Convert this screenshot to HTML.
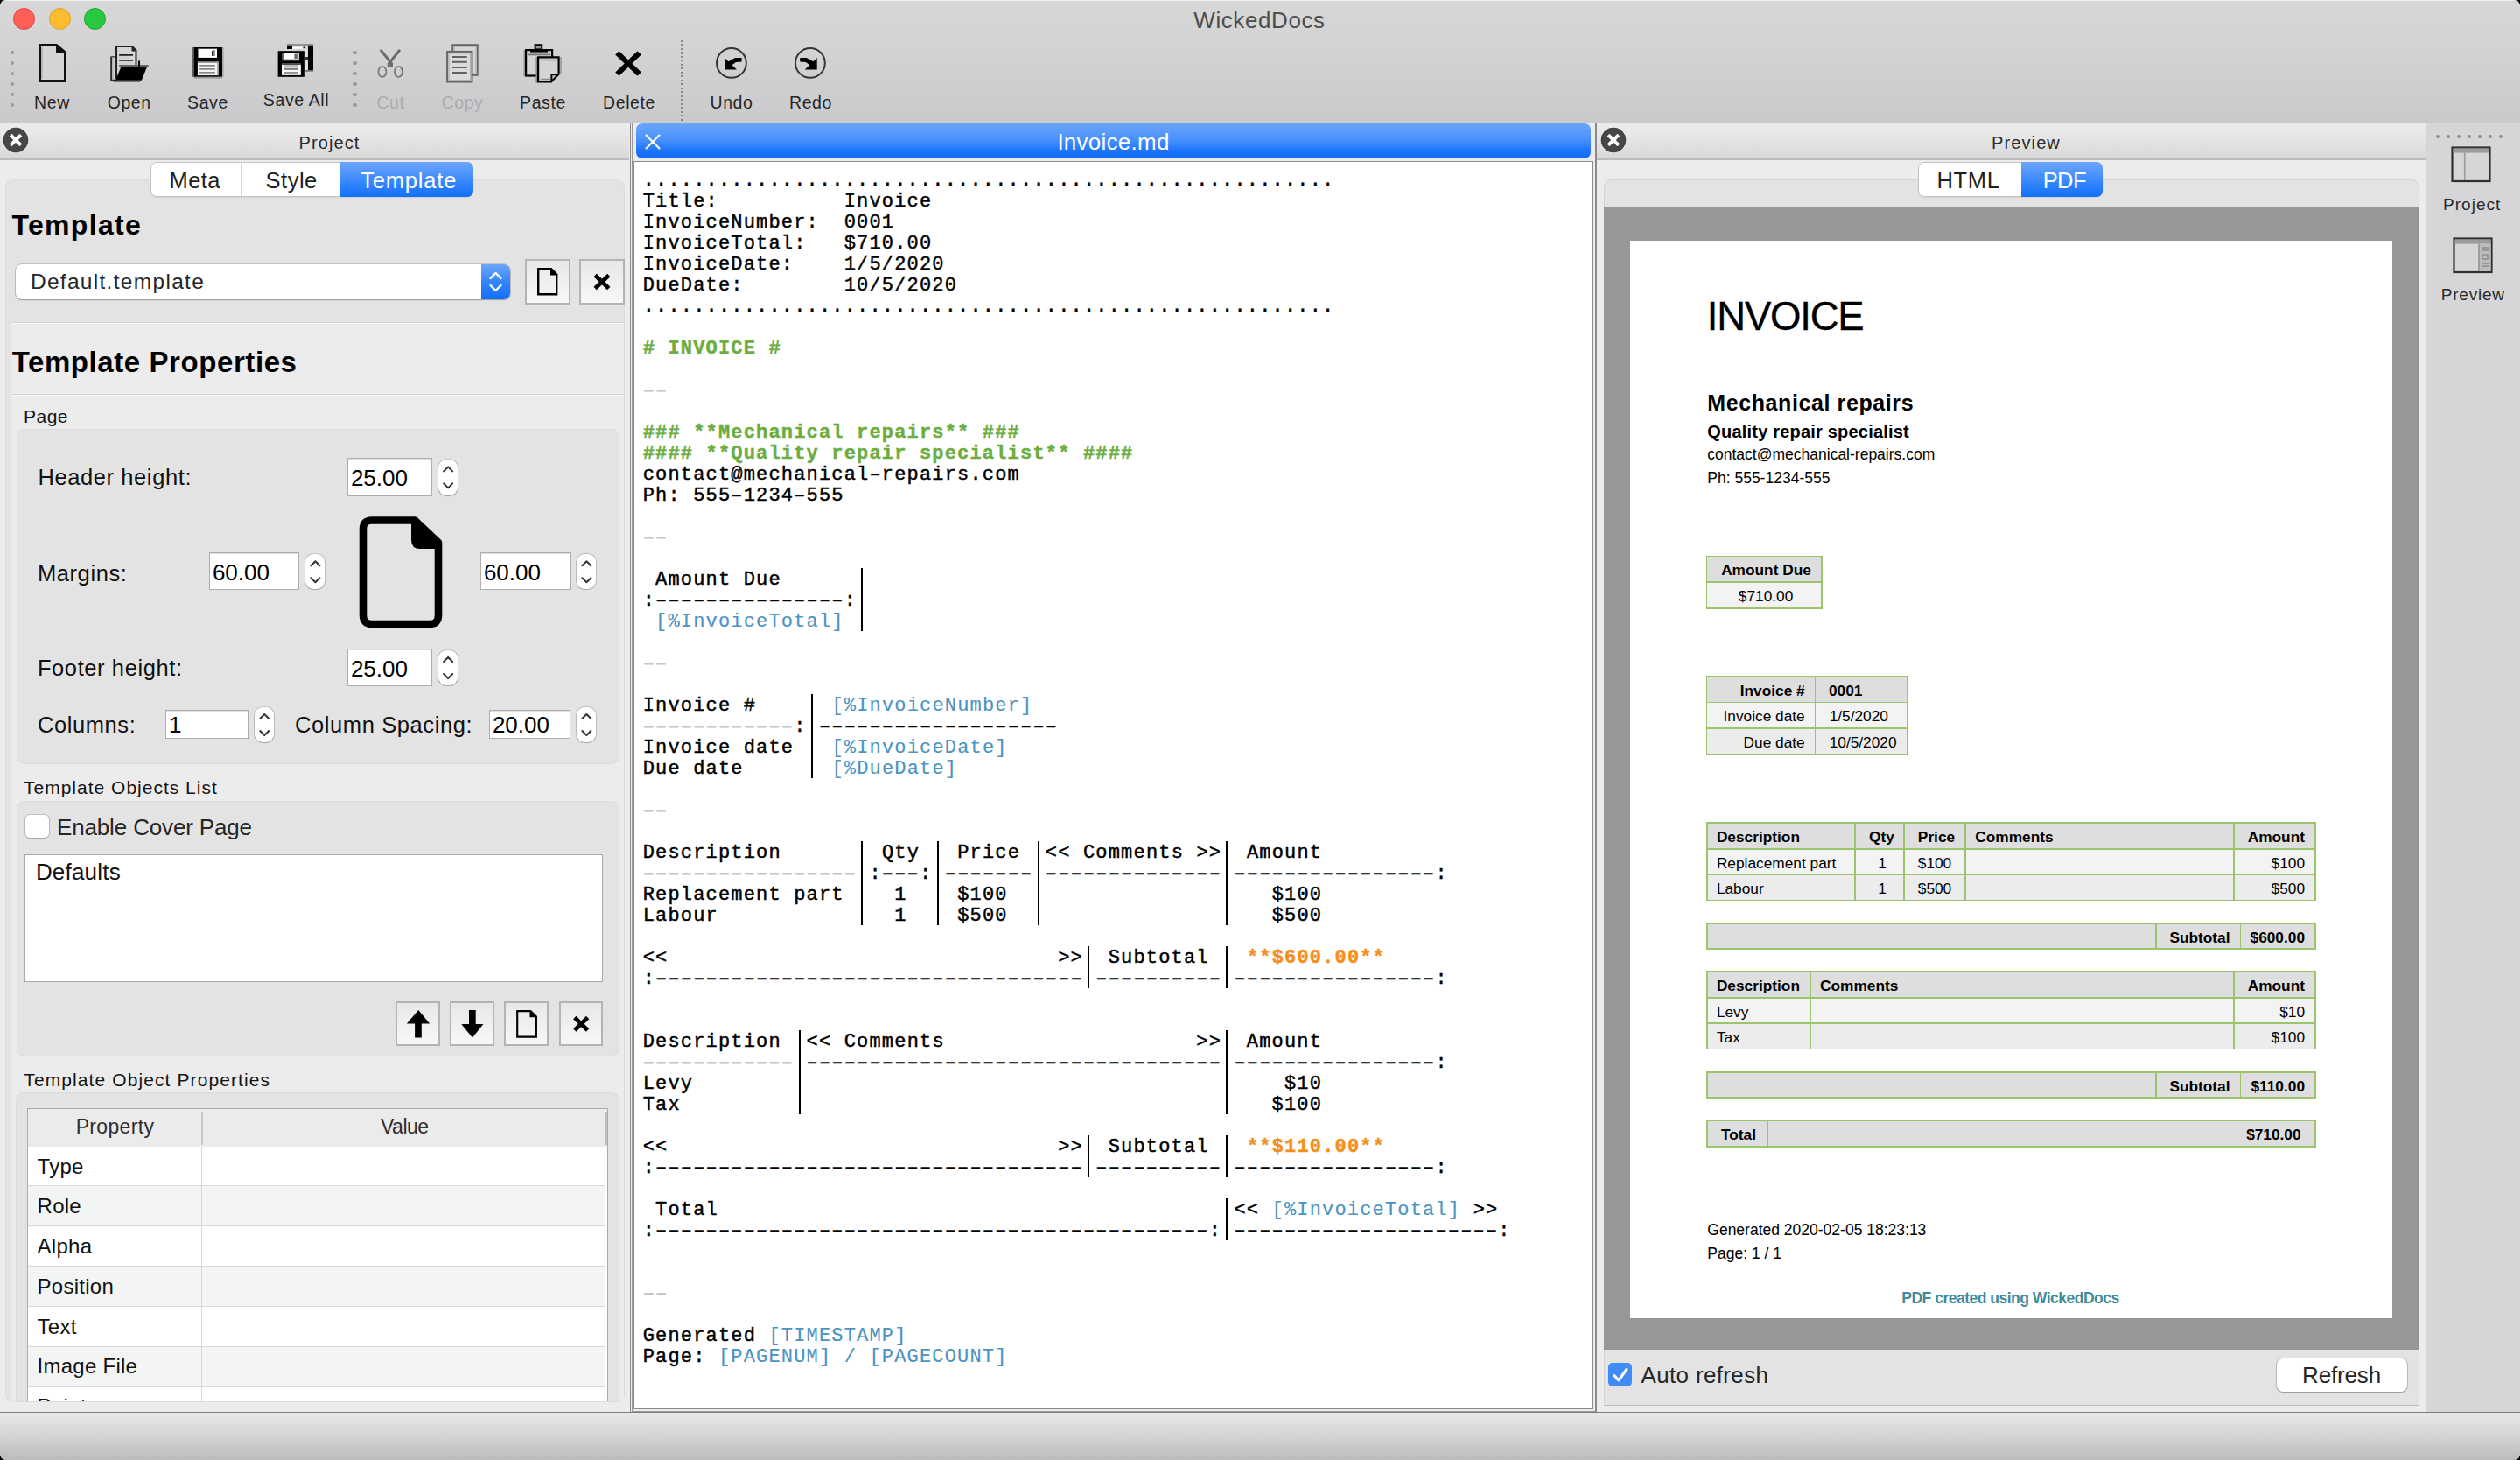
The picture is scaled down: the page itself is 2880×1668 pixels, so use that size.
<!DOCTYPE html>
<html><head><meta charset="utf-8"><title>WickedDocs</title>
<style>
html,body{margin:0;padding:0;}
body{width:2880px;height:1668px;overflow:hidden;position:relative;background:#ececec;font-family:"Liberation Sans", sans-serif;}
.a{position:absolute;box-sizing:border-box;}
.tx{white-space:pre;}
svg{position:absolute;overflow:visible;}
</style></head><body>
<div class="a" style="left:0.00px;top:0.00px;width:2880.00px;height:140.00px;background:linear-gradient(#d7d7d7,#d3d3d4 40%,#cacacc);"></div>
<div class="a" style="left:0.00px;top:0.00px;width:2880.00px;height:1.00px;background:#ededed;"></div>
<div class="a" style="left:15.30px;top:9.20px;width:25.00px;height:25.00px;border-radius:50%;background:#fe5f57;border:1px solid #e1463f;"></div>
<div class="a" style="left:55.50px;top:9.20px;width:25.00px;height:25.00px;border-radius:50%;background:#febb2e;border:1px solid #e0a028;"></div>
<div class="a" style="left:95.50px;top:9.20px;width:25.00px;height:25.00px;border-radius:50%;background:#28c840;border:1px solid #1fa934;"></div>
<div class="a tx" style="top:9.99px;font-size:26px;line-height:26px;color:#4d4d4d;font-weight:normal;font-family:'Liberation Sans', sans-serif;letter-spacing:0.6px;left:1239.50px;width:400px;text-align:center;">WickedDocs</div>
<div class="a" style="left:11.60px;top:57.60px;width:4.40px;height:4.40px;border-radius:50%;background:#9a9a9a;"></div>
<div class="a" style="left:11.60px;top:69.70px;width:4.40px;height:4.40px;border-radius:50%;background:#9a9a9a;"></div>
<div class="a" style="left:11.60px;top:81.60px;width:4.40px;height:4.40px;border-radius:50%;background:#9a9a9a;"></div>
<div class="a" style="left:11.60px;top:93.70px;width:4.40px;height:4.40px;border-radius:50%;background:#9a9a9a;"></div>
<div class="a" style="left:11.60px;top:105.80px;width:4.40px;height:4.40px;border-radius:50%;background:#9a9a9a;"></div>
<div class="a" style="left:11.60px;top:118.00px;width:4.40px;height:4.40px;border-radius:50%;background:#9a9a9a;"></div>
<div class="a" style="left:403.40px;top:57.60px;width:4.40px;height:4.40px;border-radius:50%;background:#9a9a9a;"></div>
<div class="a" style="left:403.40px;top:69.70px;width:4.40px;height:4.40px;border-radius:50%;background:#9a9a9a;"></div>
<div class="a" style="left:403.40px;top:81.60px;width:4.40px;height:4.40px;border-radius:50%;background:#9a9a9a;"></div>
<div class="a" style="left:403.40px;top:93.70px;width:4.40px;height:4.40px;border-radius:50%;background:#9a9a9a;"></div>
<div class="a" style="left:403.40px;top:105.80px;width:4.40px;height:4.40px;border-radius:50%;background:#9a9a9a;"></div>
<div class="a" style="left:403.40px;top:118.00px;width:4.40px;height:4.40px;border-radius:50%;background:#9a9a9a;"></div>
<div class="a" style="left:778.00px;top:46.00px;width:2.00px;height:92.00px;background:repeating-linear-gradient(#8a8a8a 0 2px, transparent 2px 4.5px);"></div>
<div class="a tx" style="top:107.79px;font-size:19.5px;line-height:19.5px;color:#262626;font-weight:normal;font-family:'Liberation Sans', sans-serif;letter-spacing:0.6px;left:-20.50px;width:160px;text-align:center;">New</div>
<div class="a tx" style="top:107.79px;font-size:19.5px;line-height:19.5px;color:#262626;font-weight:normal;font-family:'Liberation Sans', sans-serif;letter-spacing:0.6px;left:67.70px;width:160px;text-align:center;">Open</div>
<div class="a tx" style="top:107.79px;font-size:19.5px;line-height:19.5px;color:#262626;font-weight:normal;font-family:'Liberation Sans', sans-serif;letter-spacing:0.6px;left:157.50px;width:160px;text-align:center;">Save</div>
<div class="a tx" style="top:105.29px;font-size:19.5px;line-height:19.5px;color:#262626;font-weight:normal;font-family:'Liberation Sans', sans-serif;letter-spacing:0.6px;left:258.50px;width:160px;text-align:center;">Save All</div>
<div class="a tx" style="top:107.79px;font-size:19.5px;line-height:19.5px;color:#acacac;font-weight:normal;font-family:'Liberation Sans', sans-serif;letter-spacing:0.6px;left:366.50px;width:160px;text-align:center;">Cut</div>
<div class="a tx" style="top:107.79px;font-size:19.5px;line-height:19.5px;color:#acacac;font-weight:normal;font-family:'Liberation Sans', sans-serif;letter-spacing:0.6px;left:448.50px;width:160px;text-align:center;">Copy</div>
<div class="a tx" style="top:107.79px;font-size:19.5px;line-height:19.5px;color:#262626;font-weight:normal;font-family:'Liberation Sans', sans-serif;letter-spacing:0.6px;left:540.50px;width:160px;text-align:center;">Paste</div>
<div class="a tx" style="top:107.79px;font-size:19.5px;line-height:19.5px;color:#262626;font-weight:normal;font-family:'Liberation Sans', sans-serif;letter-spacing:0.6px;left:639.00px;width:160px;text-align:center;">Delete</div>
<div class="a tx" style="top:107.79px;font-size:19.5px;line-height:19.5px;color:#262626;font-weight:normal;font-family:'Liberation Sans', sans-serif;letter-spacing:0.6px;left:756.00px;width:160px;text-align:center;">Undo</div>
<div class="a tx" style="top:107.79px;font-size:19.5px;line-height:19.5px;color:#262626;font-weight:normal;font-family:'Liberation Sans', sans-serif;letter-spacing:0.6px;left:846.50px;width:160px;text-align:center;">Redo</div>
<svg style="left:44px;top:50px" width="32" height="44" viewBox="0 0 32 44">
<path d="M1.5 1.5 H20.5 L30.5 10 V42.5 H1.5 Z" fill="#d4d4d6" stroke="#111" stroke-width="3" stroke-linejoin="miter"/>
<path d="M20 1.5 V10.5 H30.5 Z" fill="#111"/>
<path d="M4 4 V40" stroke="#9a9a9a" stroke-width="1"/>
</svg>
<svg style="left:126px;top:52px" width="44" height="42" viewBox="0 0 44 42">
<path d="M1.2 12.5 V39.8 H7" fill="none" stroke="#2a2a2a" stroke-width="2"/>
<path d="M1.2 12.8 H7" stroke="#555" stroke-width="1.6"/>
<path d="M3.2 14 V38" stroke="#bdbdbd" stroke-width="1.4"/>
<path d="M7 1 H25 L29.5 5.5 V23" fill="#d6d6d6" stroke="#222" stroke-width="2"/>
<path d="M7 1 V38" stroke="#222" stroke-width="2"/>
<path d="M24.5 1.5 L24.5 6.5 L29.5 6.5 Z" fill="#222"/>
<path d="M10.2 10.9 H26 M10.2 16.8 H26" stroke="#222" stroke-width="1.8"/>
<path d="M10.2 23 H43.7" stroke="#666" stroke-width="2.2"/>
<path d="M33 17.5 V24" stroke="#000" stroke-width="2"/>
<path d="M6 39.7 L12.5 23.9 H42.2 L35.8 39.7 Z" fill="#000"/>
<path d="M3.5 41 H34" stroke="#777" stroke-width="2"/>
</svg>
<svg style="left:220px;top:53px" width="36" height="37" viewBox="0 0 36 37">
<rect x="0.1" y="1" width="1.7" height="33.8" fill="#555"/>
<rect x="1.8" y="1" width="32.2" height="33.8" fill="#000"/>
<rect x="1.8" y="34.8" width="32.2" height="1.8" fill="#9a9a9a"/>
<rect x="34" y="1" width="1.7" height="33.8" fill="#aaa"/>
<rect x="6.1" y="2.7" width="21.9" height="10.2" fill="#fff"/>
<rect x="6.1" y="2.7" width="1.8" height="10.2" fill="#777"/>
<rect x="22.1" y="5" width="1.9" height="5.9" fill="#000"/>
<rect x="24" y="4" width="1.8" height="7" fill="#888"/>
<rect x="5.9" y="17" width="23.9" height="16.1" fill="#f4f4f4"/>
<rect x="5.9" y="17" width="23.9" height="1.7" fill="#777"/>
<rect x="28.2" y="18.7" width="1.6" height="14.4" fill="#999"/>
<path d="M8.1 21.8 H25.8 M8.1 25.9 H25.8 M8.1 29.9 H25.8" stroke="#888" stroke-width="1.8"/>
</svg>
<svg style="left:316px;top:50px" width="42" height="38" viewBox="0 0 42 38">
<rect x="12" y="0.1" width="30" height="1.7" fill="#888"/>
<rect x="12" y="1.8" width="6" height="4.2" fill="#000"/>
<rect x="18" y="3.7" width="12" height="2" fill="#fff"/>
<rect x="30.5" y="3.5" width="1.6" height="1.6" fill="#111"/>
<rect x="36" y="1.8" width="6" height="28.2" fill="#000"/>
<rect x="32" y="6" width="4" height="24" fill="#e0e0e0"/>
<rect x="32" y="15" width="4" height="4" fill="#333"/>
<rect x="32" y="30" width="10" height="1.8" fill="#777"/>
<rect x="0.2" y="8.2" width="1.7" height="29.6" fill="#888"/>
<rect x="1.9" y="8.2" width="29.9" height="29.6" fill="#000"/>
<rect x="7.9" y="10" width="17.9" height="7.8" fill="#fff"/>
<rect x="6.3" y="10" width="1.6" height="7.8" fill="#777"/>
<rect x="20.4" y="11.5" width="3.4" height="5.5" fill="#666"/>
<rect x="6" y="18.3" width="20" height="1.4" fill="#444"/>
<rect x="6" y="23.8" width="21.9" height="12.1" fill="#f6f6f6"/>
<rect x="6" y="22.1" width="21.9" height="1.7" fill="#555"/>
<rect x="8" y="24" width="16" height="3.5" fill="#bdbdbd"/>
<path d="M8 28.8 H24 M8 33 H24" stroke="#777" stroke-width="1.7"/>
</svg>
<svg style="left:428px;top:53px" width="34" height="37" viewBox="0 0 34 37">
<path d="M6.8 3.9 L19.5 19.5 L19.5 24 M29 3.9 L16.3 19.5 L16.3 24" fill="none" stroke="#6a6a6a" stroke-width="3"/>
<ellipse cx="8.9" cy="28.9" rx="4.5" ry="6" fill="none" stroke="#7a7a7a" stroke-width="1.8"/>
<ellipse cx="27.4" cy="28.9" rx="4.5" ry="6" fill="none" stroke="#7a7a7a" stroke-width="1.8"/>
</svg>
<svg style="left:509px;top:49px" width="38" height="46" viewBox="0 0 38 46">
<rect x="8.3" y="2.2" width="28.4" height="34.6" fill="#d8d8d8" stroke="#666" stroke-width="2"/>
<rect x="10.2" y="4.2" width="24.6" height="30.6" fill="none" stroke="#b8b8b8" stroke-width="1.2"/>
<rect x="2.1" y="9.9" width="28.4" height="34.6" fill="#dadada" stroke="#666" stroke-width="2"/>
<rect x="4" y="11.8" width="24.6" height="30.8" fill="none" stroke="#b0b0b0" stroke-width="1.2"/>
<path d="M8 15.9 H24.8 M8 21.8 H24.8 M8 28 H24.8 M8 33.9 H24.8" stroke="#626262" stroke-width="2"/>
</svg>
<svg style="left:599px;top:49px" width="44" height="46" viewBox="0 0 44 46">
<rect x="-0.6" y="8" width="1.6" height="30" fill="#9a9a9a"/>
<rect x="2.1" y="8.1" width="30" height="29.4" fill="#d4d4d4" stroke="#000" stroke-width="2.2"/>
<rect x="5" y="12.5" width="25" height="1.8" fill="#777"/>
<rect x="7" y="7" width="20" height="3.6" fill="#000"/>
<rect x="12.6" y="2.2" width="7.6" height="5.2" fill="#999" stroke="#000" stroke-width="2"/>
<rect x="13.4" y="16" width="1.6" height="29.5" fill="#8a8a8a"/>
<rect x="41.2" y="16" width="1.6" height="20" fill="#9a9a9a"/>
<path d="M16.1 16.3 H39.6 V35.6 L31 44.5 H16.1 Z" fill="#d4d4d4" stroke="#000" stroke-width="2.2"/>
<path d="M31.4 44.4 V36.3 H39.6" fill="none" stroke="#000" stroke-width="2"/>
<path d="M19 19.5 H38 M19 41.5 H30" stroke="#8a8a8a" stroke-width="1.4"/>
</svg>
<svg style="left:704px;top:59px" width="28" height="27" viewBox="0 0 28 27">
<path d="M3.5 3.5 L24.5 23.5 M24.5 3.5 L3.5 23.5" stroke="#000" stroke-width="6" stroke-linecap="square"/>
</svg>
<svg style="left:817px;top:53px" width="38" height="38" viewBox="0 0 38 38">
<circle cx="18.9" cy="18.9" r="16.9" fill="none" stroke="#353535" stroke-width="2"/>
<path d="M11.1 13.1 L15.5 17.3 L23 13.1 H30.6 V17.5 L24 18 L19.5 21.2 L25 26.4 H11.1 Z" fill="#000"/>
</svg>
<svg style="left:907px;top:53px" width="38" height="38" viewBox="0 0 38 38">
<circle cx="18.9" cy="18.9" r="16.9" fill="none" stroke="#353535" stroke-width="2"/>
<path d="M26.7 13.1 L22.3 17.3 L14.8 13.1 H7.2 V17.5 L13.8 18 L18.3 21.2 L12.8 26.4 H26.7 Z" fill="#000"/>
</svg>
<div class="a" style="left:0.00px;top:1613.40px;width:2880.00px;height:54.60px;background:linear-gradient(#e8e8e8,#d3d3d3 50%,#bbbbbb);border-top:1.4px solid #7c7c7c;"></div>
<div class="a" style="left:2772.00px;top:140.00px;width:108.00px;height:1473.00px;background:#d6d6d8;"></div>
<div class="a" style="left:2784.00px;top:153.80px;width:4.00px;height:4.00px;border-radius:50%;background:#8e8e8e;"></div>
<div class="a" style="left:2796.00px;top:153.80px;width:4.00px;height:4.00px;border-radius:50%;background:#8e8e8e;"></div>
<div class="a" style="left:2808.00px;top:153.80px;width:4.00px;height:4.00px;border-radius:50%;background:#8e8e8e;"></div>
<div class="a" style="left:2820.00px;top:153.80px;width:4.00px;height:4.00px;border-radius:50%;background:#8e8e8e;"></div>
<div class="a" style="left:2832.00px;top:153.80px;width:4.00px;height:4.00px;border-radius:50%;background:#8e8e8e;"></div>
<div class="a" style="left:2844.00px;top:153.80px;width:4.00px;height:4.00px;border-radius:50%;background:#8e8e8e;"></div>
<div class="a" style="left:2856.00px;top:153.80px;width:4.00px;height:4.00px;border-radius:50%;background:#8e8e8e;"></div>
<svg style="left:2801px;top:167px" width="46" height="42" viewBox="0 0 46 42">
<rect x="1.5" y="1.5" width="43" height="38.5" fill="#d6d6d8" stroke="#2f2f2f" stroke-width="2.2"/>
<rect x="2.6" y="2.6" width="41" height="5" fill="#9b9b9b"/>
<path d="M15.7 7.6 V39" stroke="#9b9b9b" stroke-width="1.6"/>
</svg>
<div class="a tx" style="top:223.52px;font-size:19px;line-height:19px;color:#2a2a2a;font-weight:normal;font-family:'Liberation Sans', sans-serif;letter-spacing:1.0px;left:2765.20px;width:120px;text-align:center;">Project</div>
<svg style="left:2803px;top:271px" width="46" height="42" viewBox="0 0 46 42">
<rect x="1.5" y="1.5" width="43" height="38.5" fill="#d6d6d8" stroke="#2f2f2f" stroke-width="2.2"/>
<rect x="2.6" y="2.6" width="41" height="5" fill="#9b9b9b"/>
<rect x="30" y="7.6" width="13.6" height="31.3" fill="#bdbdbd"/>
<path d="M30 7.6 V39" stroke="#8b8b8b" stroke-width="1.4"/>
<path d="M33 12 H42 M33 15 H42 M33 30 H42 M33 33 H42" stroke="#8b8b8b" stroke-width="1.6"/>
<rect x="34" y="20" width="6" height="5" fill="none" stroke="#8b8b8b" stroke-width="1.4"/>
</svg>
<div class="a tx" style="top:327.42px;font-size:19px;line-height:19px;color:#2a2a2a;font-weight:normal;font-family:'Liberation Sans', sans-serif;letter-spacing:0.8px;left:2766.30px;width:120px;text-align:center;">Preview</div>
<div class="a" style="left:0;top:0;width:6px;height:6px;background:radial-gradient(circle at 6px 6px, transparent 5.5px, #000 6px);"></div>
<div class="a" style="left:2874px;top:0;width:6px;height:6px;background:radial-gradient(circle at 0px 6px, transparent 5.5px, #000 6px);"></div>
<div class="a" style="left:0;top:1662px;width:6px;height:6px;background:radial-gradient(circle at 6px 0px, transparent 5.5px, #000 6px);"></div>
<div class="a" style="left:2874px;top:1662px;width:6px;height:6px;background:radial-gradient(circle at 0px 0px, transparent 5.5px, #000 6px);"></div>
<div class="a" style="left:0.00px;top:140.00px;width:719.00px;height:1473.00px;background:#ececec;"></div>
<div class="a" style="left:0.00px;top:140.00px;width:719.00px;height:43.00px;background:linear-gradient(#ececec,#e4e4e4 50%,#d8d8d8);border-bottom:2px solid #bdbdbd;"></div>
<svg style="left:2.8000000000000007px;top:144.7px" width="30" height="30" viewBox="0 0 30 30">
<circle cx="15" cy="15" r="13.85" fill="#474747" stroke="#363636" stroke-width="1"/>
<path d="M9.1 9.1 L20.9 20.9 M20.9 9.1 L9.1 20.9" stroke="#fff" stroke-width="3.9" stroke-linecap="butt"/>
</svg>
<div class="a tx" style="top:152.77px;font-size:20px;line-height:20px;color:#2b2b2b;font-weight:normal;font-family:'Liberation Sans', sans-serif;letter-spacing:1.1px;left:226.50px;width:300px;text-align:center;">Project</div>
<div class="a" style="left:6.20px;top:204.50px;width:708.00px;height:1397.00px;background:#e3e3e3;border:1px solid #dcdcdc;border-radius:9px;"></div>
<div class="a" style="left:172.00px;top:185.10px;width:369.00px;height:39.50px;background:#fff;border:1px solid #c4c4c4;border-radius:7px;box-shadow:0 1px 1px rgba(0,0,0,0.08);"></div>
<div class="a" style="left:275.00px;top:186.50px;width:1.50px;height:37.00px;background:#d4d4d4;"></div>
<div class="a" style="left:388.00px;top:185.10px;width:153.00px;height:39.50px;background:linear-gradient(#6ca6fb,#3d8bfd 50%,#1270fc);border-radius:0 7px 7px 0;"></div>
<div class="a tx" style="top:193.61px;font-size:25.5px;line-height:25.5px;color:#1e1e1e;font-weight:normal;font-family:'Liberation Sans', sans-serif;letter-spacing:0.45px;left:162.70px;width:120px;text-align:center;">Meta</div>
<div class="a tx" style="top:193.61px;font-size:25.5px;line-height:25.5px;color:#1e1e1e;font-weight:normal;font-family:'Liberation Sans', sans-serif;letter-spacing:0.5px;left:273.20px;width:120px;text-align:center;">Style</div>
<div class="a tx" style="top:193.61px;font-size:25.5px;line-height:25.5px;color:#ffffff;font-weight:normal;font-family:'Liberation Sans', sans-serif;letter-spacing:0.8px;left:387.20px;width:160px;text-align:center;">Template</div>
<div class="a tx" style="top:241.41px;font-size:32px;line-height:32px;color:#000;font-weight:bold;font-family:'Liberation Sans', sans-serif;letter-spacing:1.33px;left:13.40px;">Template</div>
<div class="a" style="left:17.70px;top:302.30px;width:565.30px;height:39.40px;background:#fff;border-radius:7px;box-shadow:0 0 0 0.8px rgba(0,0,0,0.18), 0 1px 1.5px rgba(0,0,0,0.22);"></div>
<div class="a" style="left:550.00px;top:302.30px;width:33.00px;height:39.40px;background:linear-gradient(#6aa6fb,#2f82fd 55%,#126ffc);border-radius:0 7px 7px 0;"></div>
<svg style="left:550px;top:302px" width="33" height="40" viewBox="0 0 33 40">
<path d="M10.5 16 L16.5 10 L22.5 16 M10.5 24 L16.5 30 L22.5 24" fill="none" stroke="#fff" stroke-width="2.4" stroke-linecap="round" stroke-linejoin="round"/>
</svg>
<div class="a tx" style="top:309.86px;font-size:24.5px;line-height:24.5px;color:#262626;font-weight:normal;font-family:'Liberation Sans', sans-serif;letter-spacing:1.3px;left:34.90px;">Default.template</div>
<div class="a" style="left:600.30px;top:296.30px;width:51.40px;height:51.40px;background:linear-gradient(#e8e8e8,#f7f7f7);border:2px solid #b4b4b4;"></div>
<div class="a" style="left:662.20px;top:296.30px;width:51.40px;height:51.40px;background:linear-gradient(#e8e8e8,#f7f7f7);border:2px solid #b4b4b4;"></div>
<svg style="left:613.3px;top:305px" width="26" height="34" viewBox="0 0 26 34">
<path d="M2.2 2.2 H17 L23.2 8.4 V31.2 H2.2 Z" fill="none" stroke="#000" stroke-width="2.4"/>
<path d="M16 1 V9.6 H24.4 Z" fill="#000"/>
</svg>
<svg style="left:677px;top:312px" width="22" height="20" viewBox="0 0 22 20">
<path d="M3.2 2.6 L18.8 17.4 M18.8 2.6 L3.2 17.4" stroke="#000" stroke-width="4.8"/>
</svg>
<div class="a" style="left:12.00px;top:369.00px;width:701.00px;height:1232.00px;background:#ececec;"></div>
<div class="a" style="left:12.00px;top:368.00px;width:701.00px;height:1.00px;background:#d2d2d2;"></div>
<div class="a" style="left:12.00px;top:369.00px;width:701.00px;height:1.00px;background:#fafafa;"></div>
<div class="a tx" style="top:396.97px;font-size:33px;line-height:33px;color:#000;font-weight:bold;font-family:'Liberation Sans', sans-serif;letter-spacing:0.58px;left:13.70px;">Template Properties</div>
<div class="a" style="left:12.00px;top:449.50px;width:701.00px;height:1.00px;background:#d2d2d2;"></div>
<div class="a" style="left:12.00px;top:450.50px;width:701.00px;height:1.00px;background:#fafafa;"></div>
<div class="a tx" style="top:465.12px;font-size:21px;line-height:21px;color:#141414;font-weight:normal;font-family:'Liberation Sans', sans-serif;letter-spacing:0.5px;left:27.00px;">Page</div>
<div class="a" style="left:18.60px;top:490.00px;width:689.00px;height:383.00px;background:#e3e3e3;border:1px solid #dbdbdb;border-radius:9px;"></div>
<div class="a tx" style="top:532.71px;font-size:25.5px;line-height:25.5px;color:#111;font-weight:normal;font-family:'Liberation Sans', sans-serif;letter-spacing:0.6px;left:43.40px;">Header height:</div>
<div class="a" style="left:397.00px;top:523.40px;width:97.30px;height:43.20px;background:#fff;border:1px solid #adadad;box-shadow:inset 0 1px 0 #e0e0e0;"></div>
<div class="a tx" style="top:533.09px;font-size:26px;line-height:26px;color:#000;font-weight:normal;font-family:'Liberation Sans', sans-serif;left:400.90px;">25.00</div>
<div class="a" style="left:500.60px;top:524.90px;width:22.30px;height:40.80px;background:#fff;border-radius:9px;box-shadow:0 0 0 0.8px rgba(0,0,0,0.2), 0 1px 1px rgba(0,0,0,0.15);"></div>
<svg style="left:500.6px;top:524.9px" width="22.299999999999955" height="40.80000000000007" viewBox="0 0 22.299999999999955 40.80000000000007">
<path d="M6.149999999999977 13.400000000000034 L11.149999999999977 8.400000000000034 L16.149999999999977 13.400000000000034 M6.149999999999977 27.400000000000034 L11.149999999999977 32.400000000000034 L16.149999999999977 27.400000000000034" fill="none" stroke="#333" stroke-width="2" stroke-linecap="round" stroke-linejoin="round"/>
</svg>
<div class="a tx" style="top:642.71px;font-size:25.5px;line-height:25.5px;color:#111;font-weight:normal;font-family:'Liberation Sans', sans-serif;letter-spacing:0.6px;left:42.90px;">Margins:</div>
<div class="a" style="left:239.40px;top:631.40px;width:102.90px;height:42.90px;background:#fff;border:1px solid #adadad;box-shadow:inset 0 1px 0 #e0e0e0;"></div>
<div class="a tx" style="top:640.89px;font-size:26px;line-height:26px;color:#000;font-weight:normal;font-family:'Liberation Sans', sans-serif;left:242.90px;">60.00</div>
<div class="a" style="left:348.60px;top:632.90px;width:22.80px;height:40.50px;background:#fff;border-radius:9px;box-shadow:0 0 0 0.8px rgba(0,0,0,0.2), 0 1px 1px rgba(0,0,0,0.15);"></div>
<svg style="left:348.6px;top:632.9px" width="22.799999999999955" height="40.5" viewBox="0 0 22.799999999999955 40.5">
<path d="M6.399999999999977 13.25 L11.399999999999977 8.25 L16.399999999999977 13.25 M6.399999999999977 27.25 L11.399999999999977 32.25 L16.399999999999977 27.25" fill="none" stroke="#333" stroke-width="2" stroke-linecap="round" stroke-linejoin="round"/>
</svg>
<svg style="left:410px;top:589px" width="96" height="130" viewBox="0 0 96 130">
<path d="M15 5.5 H64 L91 31 V114 Q91 124 81 124 H15 Q5 124 5 114 V15 Q5 5.5 15 5.5 Z" fill="none" stroke="#000" stroke-width="8.6" stroke-linejoin="round"/>
<path d="M60 1.2 L95 34.5 V38 H70 Q60 38 60 28 Z" fill="#000"/>
</svg>
<div class="a" style="left:549.00px;top:631.40px;width:103.90px;height:42.90px;background:#fff;border:1px solid #adadad;box-shadow:inset 0 1px 0 #e0e0e0;"></div>
<div class="a tx" style="top:640.89px;font-size:26px;line-height:26px;color:#000;font-weight:normal;font-family:'Liberation Sans', sans-serif;left:552.90px;">60.00</div>
<div class="a" style="left:658.60px;top:632.90px;width:22.80px;height:40.50px;background:#fff;border-radius:9px;box-shadow:0 0 0 0.8px rgba(0,0,0,0.2), 0 1px 1px rgba(0,0,0,0.15);"></div>
<svg style="left:658.6px;top:632.9px" width="22.799999999999955" height="40.5" viewBox="0 0 22.799999999999955 40.5">
<path d="M6.399999999999977 13.25 L11.399999999999977 8.25 L16.399999999999977 13.25 M6.399999999999977 27.25 L11.399999999999977 32.25 L16.399999999999977 27.25" fill="none" stroke="#333" stroke-width="2" stroke-linecap="round" stroke-linejoin="round"/>
</svg>
<div class="a tx" style="top:751.31px;font-size:25.5px;line-height:25.5px;color:#111;font-weight:normal;font-family:'Liberation Sans', sans-serif;letter-spacing:0.6px;left:42.90px;">Footer height:</div>
<div class="a" style="left:397.00px;top:741.40px;width:97.30px;height:42.90px;background:#fff;border:1px solid #adadad;box-shadow:inset 0 1px 0 #e0e0e0;"></div>
<div class="a tx" style="top:750.89px;font-size:26px;line-height:26px;color:#000;font-weight:normal;font-family:'Liberation Sans', sans-serif;left:400.90px;">25.00</div>
<div class="a" style="left:500.60px;top:742.90px;width:22.30px;height:40.00px;background:#fff;border-radius:9px;box-shadow:0 0 0 0.8px rgba(0,0,0,0.2), 0 1px 1px rgba(0,0,0,0.15);"></div>
<svg style="left:500.6px;top:742.9px" width="22.299999999999955" height="40.0" viewBox="0 0 22.299999999999955 40.0">
<path d="M6.149999999999977 13.0 L11.149999999999977 8.0 L16.149999999999977 13.0 M6.149999999999977 27.0 L11.149999999999977 32.0 L16.149999999999977 27.0" fill="none" stroke="#333" stroke-width="2" stroke-linecap="round" stroke-linejoin="round"/>
</svg>
<div class="a tx" style="top:816.41px;font-size:25.5px;line-height:25.5px;color:#111;font-weight:normal;font-family:'Liberation Sans', sans-serif;letter-spacing:0.6px;left:42.90px;">Columns:</div>
<div class="a" style="left:189.00px;top:810.90px;width:95.30px;height:33.40px;background:#fff;border:1px solid #adadad;box-shadow:inset 0 1px 0 #e0e0e0;"></div>
<div class="a tx" style="top:814.99px;font-size:26px;line-height:26px;color:#000;font-weight:normal;font-family:'Liberation Sans', sans-serif;left:192.90px;">1</div>
<div class="a" style="left:290.90px;top:808.00px;width:22.50px;height:40.00px;background:#fff;border-radius:9px;box-shadow:0 0 0 0.8px rgba(0,0,0,0.2), 0 1px 1px rgba(0,0,0,0.15);"></div>
<svg style="left:290.9px;top:808px" width="22.5" height="40" viewBox="0 0 22.5 40">
<path d="M6.25 13.0 L11.25 8.0 L16.25 13.0 M6.25 27.0 L11.25 32.0 L16.25 27.0" fill="none" stroke="#333" stroke-width="2" stroke-linecap="round" stroke-linejoin="round"/>
</svg>
<div class="a tx" style="top:816.41px;font-size:25.5px;line-height:25.5px;color:#111;font-weight:normal;font-family:'Liberation Sans', sans-serif;letter-spacing:0.6px;left:337.00px;">Column Spacing:</div>
<div class="a" style="left:559.00px;top:810.90px;width:93.30px;height:33.40px;background:#fff;border:1px solid #adadad;box-shadow:inset 0 1px 0 #e0e0e0;"></div>
<div class="a tx" style="top:814.99px;font-size:26px;line-height:26px;color:#000;font-weight:normal;font-family:'Liberation Sans', sans-serif;left:562.90px;">20.00</div>
<div class="a" style="left:658.60px;top:808.00px;width:22.80px;height:40.00px;background:#fff;border-radius:9px;box-shadow:0 0 0 0.8px rgba(0,0,0,0.2), 0 1px 1px rgba(0,0,0,0.15);"></div>
<svg style="left:658.6px;top:808px" width="22.799999999999955" height="40" viewBox="0 0 22.799999999999955 40">
<path d="M6.399999999999977 13.0 L11.399999999999977 8.0 L16.399999999999977 13.0 M6.399999999999977 27.0 L11.399999999999977 32.0 L16.399999999999977 27.0" fill="none" stroke="#333" stroke-width="2" stroke-linecap="round" stroke-linejoin="round"/>
</svg>
<div class="a tx" style="top:889.22px;font-size:21px;line-height:21px;color:#141414;font-weight:normal;font-family:'Liberation Sans', sans-serif;letter-spacing:1.0px;left:27.00px;">Template Objects List</div>
<div class="a" style="left:18.60px;top:914.90px;width:689.00px;height:292.00px;background:#e3e3e3;border:1px solid #dbdbdb;border-radius:9px;"></div>
<div class="a" style="left:28.60px;top:930.60px;width:27.00px;height:26.50px;background:#fff;border-radius:5px;box-shadow:0 0 0 0.8px rgba(0,0,0,0.22), 0 1px 1px rgba(0,0,0,0.12);"></div>
<div class="a tx" style="top:932.29px;font-size:26px;line-height:26px;color:#262626;font-weight:normal;font-family:'Liberation Sans', sans-serif;letter-spacing:-0.15px;left:65.00px;">Enable Cover Page</div>
<div class="a" style="left:28.00px;top:976.30px;width:660.60px;height:146.00px;background:#fff;border:1px solid #a9a9a9;"></div>
<div class="a tx" style="top:982.89px;font-size:26px;line-height:26px;color:#111;font-weight:normal;font-family:'Liberation Sans', sans-serif;letter-spacing:0.2px;left:40.90px;">Defaults</div>
<div class="a" style="left:452.30px;top:1144.30px;width:51.10px;height:50.70px;background:linear-gradient(#e8e8e8,#f7f7f7);border:2px solid #b4b4b4;"></div>
<div class="a" style="left:514.00px;top:1144.30px;width:51.00px;height:50.70px;background:linear-gradient(#e8e8e8,#f7f7f7);border:2px solid #b4b4b4;"></div>
<div class="a" style="left:576.00px;top:1144.30px;width:51.40px;height:50.70px;background:linear-gradient(#e8e8e8,#f7f7f7);border:2px solid #b4b4b4;"></div>
<div class="a" style="left:638.60px;top:1144.30px;width:50.80px;height:50.70px;background:linear-gradient(#e8e8e8,#f7f7f7);border:2px solid #b4b4b4;"></div>
<svg style="left:440px;top:1135px" width="260" height="70" viewBox="0 0 260 70">
<path d="M38.2 19.1 L24.8 34.5 H34.1 V50.6 H41.8 V34.5 H51.1 Z" fill="#000"/>
<path d="M96 19.1 H103.7 V35 H112.5 L99.9 50.6 L87.3 35 H96 Z" fill="#000"/>
<path d="M151.2 20.1 H166.5 L172.9 26.5 V49.6 H151.2 Z" fill="none" stroke="#000" stroke-width="2.1"/>
<path d="M165.5 19.1 V27.3 H173.9 Z" fill="#000"/>
<path d="M216.8 27.6 L231.6 41.9 M231.6 27.6 L216.8 41.9" stroke="#000" stroke-width="4.8"/>
</svg>
<div class="a tx" style="top:1223.22px;font-size:21px;line-height:21px;color:#141414;font-weight:normal;font-family:'Liberation Sans', sans-serif;letter-spacing:1.1px;left:27.30px;">Template Object Properties</div>
<div class="a" style="left:0;top:0;width:719px;height:1601px;overflow:hidden;pointer-events:none;">
<div class="a" style="left:18.30px;top:1248.00px;width:689.30px;height:400.00px;background:#e3e3e3;border:1px solid #dbdbdb;border-radius:9px;"></div>
<div class="a" style="left:30.50px;top:1266.40px;width:664.30px;height:400.00px;background:#fff;border:1px solid #ababab;"></div>
<div class="a" style="left:31.50px;top:1267.40px;width:662.30px;height:42.20px;background:#ebebeb;"></div>
<div class="a" style="left:230.00px;top:1270.00px;width:2.00px;height:38.00px;background:#c9c9c9;"></div>
<div class="a" style="left:691.50px;top:1270.00px;width:2.50px;height:38.00px;background:#bdbdbd;"></div>
<div class="a tx" style="top:1275.53px;font-size:23px;line-height:23px;color:#2e2e2e;font-weight:normal;font-family:'Liberation Sans', sans-serif;letter-spacing:0.35px;left:31.50px;width:200px;text-align:center;">Property</div>
<div class="a tx" style="top:1275.53px;font-size:23px;line-height:23px;color:#2e2e2e;font-weight:normal;font-family:'Liberation Sans', sans-serif;letter-spacing:-0.5px;left:362.30px;width:200px;text-align:center;">Value</div>
<div class="a" style="left:31.50px;top:1309.60px;width:660.50px;height:46.00px;background:#ffffff;"></div>
<div class="a tx" style="top:1320.88px;font-size:24px;line-height:24px;color:#111;font-weight:normal;font-family:'Liberation Sans', sans-serif;letter-spacing:0.25px;left:42.60px;">Type</div>
<div class="a" style="left:31.50px;top:1354.50px;width:660.50px;height:46.00px;background:#f3f4f4;"></div>
<div class="a" style="left:31.50px;top:1354.00px;width:660.50px;height:1.20px;background:#d8d8d8;"></div>
<div class="a tx" style="top:1365.78px;font-size:24px;line-height:24px;color:#111;font-weight:normal;font-family:'Liberation Sans', sans-serif;letter-spacing:0.25px;left:42.60px;">Role</div>
<div class="a" style="left:31.50px;top:1400.70px;width:660.50px;height:46.00px;background:#ffffff;"></div>
<div class="a" style="left:31.50px;top:1400.20px;width:660.50px;height:1.20px;background:#d8d8d8;"></div>
<div class="a tx" style="top:1411.98px;font-size:24px;line-height:24px;color:#111;font-weight:normal;font-family:'Liberation Sans', sans-serif;letter-spacing:0.25px;left:42.60px;">Alpha</div>
<div class="a" style="left:31.50px;top:1446.50px;width:660.50px;height:46.00px;background:#f3f4f4;"></div>
<div class="a" style="left:31.50px;top:1446.00px;width:660.50px;height:1.20px;background:#d8d8d8;"></div>
<div class="a tx" style="top:1457.78px;font-size:24px;line-height:24px;color:#111;font-weight:normal;font-family:'Liberation Sans', sans-serif;letter-spacing:0.25px;left:42.60px;">Position</div>
<div class="a" style="left:31.50px;top:1492.40px;width:660.50px;height:46.00px;background:#ffffff;"></div>
<div class="a" style="left:31.50px;top:1491.90px;width:660.50px;height:1.20px;background:#d8d8d8;"></div>
<div class="a tx" style="top:1503.68px;font-size:24px;line-height:24px;color:#111;font-weight:normal;font-family:'Liberation Sans', sans-serif;letter-spacing:0.25px;left:42.60px;">Text</div>
<div class="a" style="left:31.50px;top:1538.20px;width:660.50px;height:46.00px;background:#f3f4f4;"></div>
<div class="a" style="left:31.50px;top:1537.70px;width:660.50px;height:1.20px;background:#d8d8d8;"></div>
<div class="a tx" style="top:1549.48px;font-size:24px;line-height:24px;color:#111;font-weight:normal;font-family:'Liberation Sans', sans-serif;letter-spacing:0.25px;left:42.60px;">Image File</div>
<div class="a" style="left:31.50px;top:1584.00px;width:660.50px;height:46.00px;background:#ffffff;"></div>
<div class="a" style="left:31.50px;top:1583.50px;width:660.50px;height:1.20px;background:#d8d8d8;"></div>
<div class="a tx" style="top:1595.28px;font-size:24px;line-height:24px;color:#111;font-weight:normal;font-family:'Liberation Sans', sans-serif;letter-spacing:0.25px;left:42.60px;">Point</div>
<div class="a" style="left:230.30px;top:1309.60px;width:1.20px;height:300.00px;background:#d6d6d6;"></div>
</div>
<div class="a" style="left:719.00px;top:140.00px;width:106.00px;height:1473.00px;background:#ececec;"></div>
<div class="a" style="left:721.60px;top:139.80px;width:1103.00px;height:44.50px;background:#ececec;"></div>
<div class="a" style="left:721.60px;top:139.80px;width:1103.00px;height:1.00px;background:#8e8e8e;"></div>
<div class="a" style="left:721.80px;top:139.80px;width:0.90px;height:1473.00px;background:#9a9a9a;"></div>
<div class="a" style="left:719.50px;top:139.80px;width:1.70px;height:1473.50px;background:#8a8a8a;"></div>
<div class="a" style="left:1822.80px;top:139.80px;width:2.10px;height:1473.50px;background:#8a8a8a;"></div>
<div class="a" style="left:722.20px;top:1611.90px;width:1101.00px;height:0.90px;background:#9a9a9a;"></div>
<div class="a" style="left:727.40px;top:141.20px;width:1090.60px;height:39.50px;background:linear-gradient(#6aa5fb,#4a92fc 45%,#1a73fd 80%,#0f6cfc);border-radius:7px;"></div>
<svg style="left:737px;top:152.5px" width="18" height="18" viewBox="0 0 18 18">
<path d="M1 1 L17 17 M17 1 L1 17" stroke="#fff" stroke-width="2.2"/>
</svg>
<div class="a tx" style="top:148.79px;font-size:26px;line-height:26px;color:#ffffff;font-weight:normal;font-family:'Liberation Sans', sans-serif;letter-spacing:0.25px;left:1122.50px;width:300px;text-align:center;">Invoice.md</div>
<div class="a" style="left:724.40px;top:184.20px;width:1097.00px;height:1426.00px;background:#ffffff;border:0.9px solid #8c8c8c;"></div>
<pre class="a" style="margin:0;left:734.7px;top:194.75px;-webkit-text-stroke:0.45px currentColor;font-family:'Liberation Mono', monospace;font-size:22px;line-height:24px;letter-spacing:1.175px;color:#000;"><span style="color:#000;">.......................................................</span>
<span style="color:#000;">Title:          Invoice</span>
<span style="color:#000;">InvoiceNumber:  0001</span>
<span style="color:#000;">InvoiceTotal:   $710.00</span>
<span style="color:#000;">InvoiceDate:    1/5/2020</span>
<span style="color:#000;">DueDate:        10/5/2020</span>
<span style="color:#000;">.......................................................</span>

<span style="color:#6cad3f;font-weight:bold;"># INVOICE #</span>

<span style="color:#c3c7cc;-webkit-text-stroke:0.8px #c3c7cc;">&#x2013;&#x2013;</span>

<span style="color:#6cad3f;font-weight:bold;">### **Mechanical repairs** ###</span>
<span style="color:#6cad3f;font-weight:bold;">#### **Quality repair specialist** ####</span>
<span style="color:#000;">contact@mechanical&#x2013;repairs.com</span>
<span style="color:#000;">Ph: 555&#x2013;1234&#x2013;555</span>

<span style="color:#c3c7cc;-webkit-text-stroke:0.8px #c3c7cc;">&#x2013;&#x2013;</span>

<span style="color:#000;"> </span><span style="color:#000;">Amount Due</span><span style="color:#000;">      </span><span style="color:#000;"> </span>
<span style="color:#000;">:&#x2013;&#x2013;&#x2013;&#x2013;&#x2013;&#x2013;&#x2013;&#x2013;&#x2013;&#x2013;&#x2013;&#x2013;&#x2013;&#x2013;&#x2013;: </span>
<span style="color:#000;"> </span><span style="color:#4a93c3;-webkit-text-stroke:0.15px #4a93c3;">[%InvoiceTotal]</span><span style="color:#000;"> </span><span style="color:#000;"> </span>

<span style="color:#c3c7cc;-webkit-text-stroke:0.8px #c3c7cc;">&#x2013;&#x2013;</span>

<span style="color:#000;">Invoice #</span><span style="color:#000;">    </span><span style="color:#000;"> </span><span style="color:#000;"> </span><span style="color:#4a93c3;-webkit-text-stroke:0.15px #4a93c3;">[%InvoiceNumber]</span>
<span style="color:#c3c7cc;-webkit-text-stroke:0.8px #c3c7cc;">&#x2013;&#x2013;&#x2013;&#x2013;&#x2013;&#x2013;&#x2013;&#x2013;&#x2013;&#x2013;&#x2013;&#x2013;</span><span style="color:#000;">: &#x2013;&#x2013;&#x2013;&#x2013;&#x2013;&#x2013;&#x2013;&#x2013;&#x2013;&#x2013;&#x2013;&#x2013;&#x2013;&#x2013;&#x2013;&#x2013;&#x2013;&#x2013;&#x2013;</span>
<span style="color:#000;">Invoice date</span><span style="color:#000;"> </span><span style="color:#000;"> </span><span style="color:#000;"> </span><span style="color:#4a93c3;-webkit-text-stroke:0.15px #4a93c3;">[%InvoiceDate]</span>
<span style="color:#000;">Due date</span><span style="color:#000;">     </span><span style="color:#000;"> </span><span style="color:#000;"> </span><span style="color:#4a93c3;-webkit-text-stroke:0.15px #4a93c3;">[%DueDate]</span>

<span style="color:#c3c7cc;-webkit-text-stroke:0.8px #c3c7cc;">&#x2013;&#x2013;</span>

<span style="color:#000;">Description</span><span style="color:#000;">      </span><span style="color:#000;"> </span><span style="color:#000;"> </span><span style="color:#000;">Qty</span><span style="color:#000;"> </span><span style="color:#000;"> </span><span style="color:#000;"> </span><span style="color:#000;">Price</span><span style="color:#000;"> </span><span style="color:#000;"> &lt;&lt; Comments &gt;&gt; </span><span style="color:#000;"> </span><span style="color:#000;">Amount</span>
<span style="color:#c3c7cc;-webkit-text-stroke:0.8px #c3c7cc;">&#x2013;&#x2013;&#x2013;&#x2013;&#x2013;&#x2013;&#x2013;&#x2013;&#x2013;&#x2013;&#x2013;&#x2013;&#x2013;&#x2013;&#x2013;&#x2013;&#x2013;</span><span style="color:#000;"> :&#x2013;&#x2013;&#x2013;: &#x2013;&#x2013;&#x2013;&#x2013;&#x2013;&#x2013;&#x2013; &#x2013;&#x2013;&#x2013;&#x2013;&#x2013;&#x2013;&#x2013;&#x2013;&#x2013;&#x2013;&#x2013;&#x2013;&#x2013;&#x2013; &#x2013;&#x2013;&#x2013;&#x2013;&#x2013;&#x2013;&#x2013;&#x2013;&#x2013;&#x2013;&#x2013;&#x2013;&#x2013;&#x2013;&#x2013;&#x2013;:</span>
<span style="color:#000;">Replacement part</span><span style="color:#000;"> </span><span style="color:#000;"> </span><span style="color:#000;">  </span><span style="color:#000;">1</span><span style="color:#000;">  </span><span style="color:#000;"> </span><span style="color:#000;"> </span><span style="color:#000;">$100</span><span style="color:#000;">  </span><span style="color:#000;"> </span><span style="color:#000;">              </span><span style="color:#000;"> </span><span style="color:#000;">   </span><span style="color:#000;">$100</span>
<span style="color:#000;">Labour</span><span style="color:#000;">           </span><span style="color:#000;"> </span><span style="color:#000;">  </span><span style="color:#000;">1</span><span style="color:#000;">  </span><span style="color:#000;"> </span><span style="color:#000;"> </span><span style="color:#000;">$500</span><span style="color:#000;">  </span><span style="color:#000;"> </span><span style="color:#000;">              </span><span style="color:#000;"> </span><span style="color:#000;">   </span><span style="color:#000;">$500</span>

<span style="color:#000;">&lt;&lt;</span><span style="color:#000;">                               </span><span style="color:#000;">&gt;&gt; </span><span style="color:#000;"> </span><span style="color:#000;">Subtotal</span><span style="color:#000;"> </span><span style="color:#000;"> </span><span style="color:#000;"> </span><span style="color:#f58f1c;font-weight:bold;">**$600.00**</span>
<span style="color:#000;">:&#x2013;&#x2013;&#x2013;&#x2013;&#x2013;&#x2013;&#x2013;&#x2013;&#x2013;&#x2013;&#x2013;&#x2013;&#x2013;&#x2013;&#x2013;&#x2013;&#x2013;&#x2013;&#x2013;&#x2013;&#x2013;&#x2013;&#x2013;&#x2013;&#x2013;&#x2013;&#x2013;&#x2013;&#x2013;&#x2013;&#x2013;&#x2013;&#x2013;&#x2013; &#x2013;&#x2013;&#x2013;&#x2013;&#x2013;&#x2013;&#x2013;&#x2013;&#x2013;&#x2013; &#x2013;&#x2013;&#x2013;&#x2013;&#x2013;&#x2013;&#x2013;&#x2013;&#x2013;&#x2013;&#x2013;&#x2013;&#x2013;&#x2013;&#x2013;&#x2013;:</span>


<span style="color:#000;">Description</span><span style="color:#000;"> </span><span style="color:#000;"> &lt;&lt; Comments</span><span style="color:#000;">                    </span><span style="color:#000;">&gt;&gt; </span><span style="color:#000;"> </span><span style="color:#000;">Amount</span>
<span style="color:#c3c7cc;-webkit-text-stroke:0.8px #c3c7cc;">&#x2013;&#x2013;&#x2013;&#x2013;&#x2013;&#x2013;&#x2013;&#x2013;&#x2013;&#x2013;&#x2013;&#x2013;</span><span style="color:#000;"> &#x2013;&#x2013;&#x2013;&#x2013;&#x2013;&#x2013;&#x2013;&#x2013;&#x2013;&#x2013;&#x2013;&#x2013;&#x2013;&#x2013;&#x2013;&#x2013;&#x2013;&#x2013;&#x2013;&#x2013;&#x2013;&#x2013;&#x2013;&#x2013;&#x2013;&#x2013;&#x2013;&#x2013;&#x2013;&#x2013;&#x2013;&#x2013;&#x2013; &#x2013;&#x2013;&#x2013;&#x2013;&#x2013;&#x2013;&#x2013;&#x2013;&#x2013;&#x2013;&#x2013;&#x2013;&#x2013;&#x2013;&#x2013;&#x2013;:</span>
<span style="color:#000;">Levy</span><span style="color:#000;">        </span><span style="color:#000;"> </span><span style="color:#000;">                                 </span><span style="color:#000;"> </span><span style="color:#000;">    </span><span style="color:#000;">$10</span>
<span style="color:#000;">Tax</span><span style="color:#000;">         </span><span style="color:#000;"> </span><span style="color:#000;">                                 </span><span style="color:#000;"> </span><span style="color:#000;">   </span><span style="color:#000;">$100</span>

<span style="color:#000;">&lt;&lt;</span><span style="color:#000;">                               </span><span style="color:#000;">&gt;&gt; </span><span style="color:#000;"> </span><span style="color:#000;">Subtotal</span><span style="color:#000;"> </span><span style="color:#000;"> </span><span style="color:#000;"> </span><span style="color:#f58f1c;font-weight:bold;">**$110.00**</span>
<span style="color:#000;">:&#x2013;&#x2013;&#x2013;&#x2013;&#x2013;&#x2013;&#x2013;&#x2013;&#x2013;&#x2013;&#x2013;&#x2013;&#x2013;&#x2013;&#x2013;&#x2013;&#x2013;&#x2013;&#x2013;&#x2013;&#x2013;&#x2013;&#x2013;&#x2013;&#x2013;&#x2013;&#x2013;&#x2013;&#x2013;&#x2013;&#x2013;&#x2013;&#x2013;&#x2013; &#x2013;&#x2013;&#x2013;&#x2013;&#x2013;&#x2013;&#x2013;&#x2013;&#x2013;&#x2013; &#x2013;&#x2013;&#x2013;&#x2013;&#x2013;&#x2013;&#x2013;&#x2013;&#x2013;&#x2013;&#x2013;&#x2013;&#x2013;&#x2013;&#x2013;&#x2013;:</span>

<span style="color:#000;"> </span><span style="color:#000;">Total</span><span style="color:#000;">                                        </span><span style="color:#000;"> &lt;&lt; </span><span style="color:#4a93c3;-webkit-text-stroke:0.15px #4a93c3;">[%InvoiceTotal]</span><span style="color:#000;"> </span><span style="color:#000;">&gt;&gt;</span>
<span style="color:#000;">:&#x2013;&#x2013;&#x2013;&#x2013;&#x2013;&#x2013;&#x2013;&#x2013;&#x2013;&#x2013;&#x2013;&#x2013;&#x2013;&#x2013;&#x2013;&#x2013;&#x2013;&#x2013;&#x2013;&#x2013;&#x2013;&#x2013;&#x2013;&#x2013;&#x2013;&#x2013;&#x2013;&#x2013;&#x2013;&#x2013;&#x2013;&#x2013;&#x2013;&#x2013;&#x2013;&#x2013;&#x2013;&#x2013;&#x2013;&#x2013;&#x2013;&#x2013;&#x2013;&#x2013;: &#x2013;&#x2013;&#x2013;&#x2013;&#x2013;&#x2013;&#x2013;&#x2013;&#x2013;&#x2013;&#x2013;&#x2013;&#x2013;&#x2013;&#x2013;&#x2013;&#x2013;&#x2013;&#x2013;&#x2013;&#x2013;:</span>


<span style="color:#c3c7cc;-webkit-text-stroke:0.8px #c3c7cc;">&#x2013;&#x2013;</span>

<span style="color:#000;">Generated </span><span style="color:#4a93c3;-webkit-text-stroke:0.15px #4a93c3;">[TIMESTAMP]</span>
<span style="color:#000;">Page: </span><span style="color:#4a93c3;-webkit-text-stroke:0.15px #4a93c3;">[PAGENUM] / [PAGECOUNT]</span></pre>
<div class="a" style="left:984.46px;top:648.80px;width:2.00px;height:72.00px;background:#000;"></div>
<div class="a" style="left:984.46px;top:960.80px;width:2.00px;height:96.00px;background:#000;"></div>
<div class="a" style="left:926.96px;top:792.80px;width:2.00px;height:96.00px;background:#000;"></div>
<div class="a" style="left:1070.71px;top:960.80px;width:2.00px;height:96.00px;background:#000;"></div>
<div class="a" style="left:1185.71px;top:960.80px;width:2.00px;height:96.00px;background:#000;"></div>
<div class="a" style="left:1401.34px;top:960.80px;width:2.00px;height:96.00px;background:#000;"></div>
<div class="a" style="left:1401.34px;top:1080.80px;width:2.00px;height:48.00px;background:#000;"></div>
<div class="a" style="left:1401.34px;top:1176.80px;width:2.00px;height:96.00px;background:#000;"></div>
<div class="a" style="left:1401.34px;top:1296.80px;width:2.00px;height:48.00px;background:#000;"></div>
<div class="a" style="left:1401.34px;top:1368.80px;width:2.00px;height:48.00px;background:#000;"></div>
<div class="a" style="left:1243.21px;top:1080.80px;width:2.00px;height:48.00px;background:#000;"></div>
<div class="a" style="left:1243.21px;top:1296.80px;width:2.00px;height:48.00px;background:#000;"></div>
<div class="a" style="left:912.59px;top:1176.80px;width:2.00px;height:96.00px;background:#000;"></div>
<div class="a" style="left:1824.80px;top:140.00px;width:947.20px;height:1473.00px;background:#ececec;"></div>
<div class="a" style="left:1824.80px;top:140.00px;width:947.20px;height:43.00px;background:linear-gradient(#ececec,#e4e4e4 50%,#d8d8d8);border-bottom:2px solid #bdbdbd;"></div>
<svg style="left:1828.8px;top:144.7px" width="30" height="30" viewBox="0 0 30 30">
<circle cx="15" cy="15" r="13.85" fill="#474747" stroke="#363636" stroke-width="1"/>
<path d="M9.1 9.1 L20.9 20.9 M20.9 9.1 L9.1 20.9" stroke="#fff" stroke-width="3.9" stroke-linecap="butt"/>
</svg>
<div class="a tx" style="top:153.07px;font-size:20px;line-height:20px;color:#2b2b2b;font-weight:normal;font-family:'Liberation Sans', sans-serif;letter-spacing:1.1px;left:2165.50px;width:300px;text-align:center;">Preview</div>
<div class="a" style="left:1832.60px;top:204.60px;width:932.00px;height:1401.80px;background:#e3e3e3;border:1px solid #d2d2d2;border-bottom:1.6px solid #bdbdbd;border-radius:9px 9px 0 0;"></div>
<div class="a" style="left:2192.00px;top:185.00px;width:210.60px;height:39.60px;background:#fff;border:1px solid #c4c4c4;border-radius:7px;box-shadow:0 1px 1px rgba(0,0,0,0.08);"></div>
<div class="a" style="left:2310.00px;top:185.00px;width:92.60px;height:39.60px;background:linear-gradient(#6ca6fb,#3d8bfd 50%,#1270fc);border-radius:0 7px 7px 0;"></div>
<div class="a tx" style="top:193.61px;font-size:25.5px;line-height:25.5px;color:#1e1e1e;font-weight:normal;font-family:'Liberation Sans', sans-serif;letter-spacing:0.7px;left:2179.50px;width:140px;text-align:center;">HTML</div>
<div class="a tx" style="top:193.61px;font-size:25.5px;line-height:25.5px;color:#ffffff;font-weight:normal;font-family:'Liberation Sans', sans-serif;letter-spacing:-0.6px;left:2289.30px;width:140px;text-align:center;">PDF</div>
<div class="a" style="left:1833.40px;top:235.80px;width:931.10px;height:1306.00px;background:#989796;border-top:1.2px solid #7c7c7c;"></div>
<div class="a" style="left:1862.80px;top:274.80px;width:871.00px;height:1231.20px;background:#fff;"></div>
<div class="a tx" style="top:339.38px;font-size:45.5px;line-height:45.5px;color:#000;font-weight:normal;font-family:'Liberation Sans', sans-serif;letter-spacing:-1.2px;left:1950.80px;-webkit-text-stroke:0.35px #000;">INVOICE</div>
<div class="a tx" style="top:448.44px;font-size:25px;line-height:25px;color:#000;font-weight:bold;font-family:'Liberation Sans', sans-serif;letter-spacing:0.6px;left:1951.30px;">Mechanical repairs</div>
<div class="a tx" style="top:483.07px;font-size:20px;line-height:20px;color:#000;font-weight:bold;font-family:'Liberation Sans', sans-serif;letter-spacing:0.2px;left:1951.30px;">Quality repair specialist</div>
<div class="a tx" style="top:511.49px;font-size:17.5px;line-height:17.5px;color:#000;font-weight:normal;font-family:'Liberation Sans', sans-serif;left:1951.30px;">contact@mechanical-repairs.com</div>
<div class="a tx" style="top:538.19px;font-size:17.5px;line-height:17.5px;color:#000;font-weight:normal;font-family:'Liberation Sans', sans-serif;left:1951.30px;">Ph: 555-1234-555</div>
<div class="a" style="left:1950.40px;top:635.60px;width:131.60px;height:29.40px;background:#dedede;"></div>
<div class="a" style="left:1950.40px;top:665.00px;width:131.60px;height:29.90px;background:#f3f3f3;"></div>
<div class="a" style="left:1949.55px;top:634.75px;width:133.30px;height:1.70px;background:#9cc46a;"></div>
<div class="a" style="left:1949.55px;top:664.15px;width:133.30px;height:1.70px;background:#9cc46a;"></div>
<div class="a" style="left:1949.55px;top:694.05px;width:133.30px;height:1.70px;background:#9cc46a;"></div>
<div class="a" style="left:1949.55px;top:634.75px;width:1.70px;height:61.00px;background:#9cc46a;"></div>
<div class="a" style="left:2081.15px;top:634.75px;width:1.70px;height:61.00px;background:#9cc46a;"></div>
<div class="a tx" style="top:643.46px;font-size:17.3px;line-height:17.3px;color:#000;font-weight:bold;font-family:'Liberation Sans', sans-serif;left:1718.50px;width:600px;text-align:center;">Amount Due</div>
<div class="a tx" style="top:672.86px;font-size:17.3px;line-height:17.3px;color:#000;font-weight:normal;font-family:'Liberation Sans', sans-serif;left:1718.10px;width:600px;text-align:center;">$710.00</div>
<div class="a" style="left:1950.50px;top:773.10px;width:229.10px;height:29.40px;background:#dedede;"></div>
<div class="a" style="left:1950.50px;top:802.50px;width:229.10px;height:29.30px;background:#f3f3f3;"></div>
<div class="a" style="left:1950.50px;top:831.80px;width:229.10px;height:29.70px;background:#ececec;"></div>
<div class="a" style="left:1949.65px;top:772.25px;width:230.80px;height:1.70px;background:#9cc46a;"></div>
<div class="a" style="left:1949.65px;top:801.65px;width:230.80px;height:1.70px;background:#9cc46a;"></div>
<div class="a" style="left:1949.65px;top:830.95px;width:230.80px;height:1.70px;background:#9cc46a;"></div>
<div class="a" style="left:1949.65px;top:860.65px;width:230.80px;height:1.70px;background:#9cc46a;"></div>
<div class="a" style="left:1949.65px;top:772.25px;width:1.70px;height:90.10px;background:#9cc46a;"></div>
<div class="a" style="left:2073.55px;top:772.25px;width:1.70px;height:90.10px;background:#9cc46a;"></div>
<div class="a" style="left:2178.75px;top:772.25px;width:1.70px;height:90.10px;background:#9cc46a;"></div>
<div class="a tx" style="top:780.96px;font-size:17.3px;line-height:17.3px;color:#000;font-weight:bold;font-family:'Liberation Sans', sans-serif;left:1462.70px;width:600px;text-align:right;">Invoice #</div>
<div class="a tx" style="top:780.96px;font-size:17.3px;line-height:17.3px;color:#000;font-weight:bold;font-family:'Liberation Sans', sans-serif;left:2090.00px;">0001</div>
<div class="a tx" style="top:810.36px;font-size:17.3px;line-height:17.3px;color:#000;font-weight:normal;font-family:'Liberation Sans', sans-serif;left:1462.70px;width:600px;text-align:right;">Invoice date</div>
<div class="a tx" style="top:810.36px;font-size:17.3px;line-height:17.3px;color:#000;font-weight:normal;font-family:'Liberation Sans', sans-serif;left:2090.70px;">1/5/2020</div>
<div class="a tx" style="top:839.66px;font-size:17.3px;line-height:17.3px;color:#000;font-weight:normal;font-family:'Liberation Sans', sans-serif;left:1462.70px;width:600px;text-align:right;">Due date</div>
<div class="a tx" style="top:839.66px;font-size:17.3px;line-height:17.3px;color:#000;font-weight:normal;font-family:'Liberation Sans', sans-serif;left:2090.70px;">10/5/2020</div>
<div class="a" style="left:1950.90px;top:940.30px;width:695.20px;height:29.50px;background:#dedede;"></div>
<div class="a" style="left:1950.90px;top:969.80px;width:695.20px;height:29.30px;background:#f3f3f3;"></div>
<div class="a" style="left:1950.90px;top:999.10px;width:695.20px;height:29.50px;background:#ececec;"></div>
<div class="a" style="left:1950.05px;top:939.45px;width:696.90px;height:1.70px;background:#9cc46a;"></div>
<div class="a" style="left:1950.05px;top:968.95px;width:696.90px;height:1.70px;background:#9cc46a;"></div>
<div class="a" style="left:1950.05px;top:998.25px;width:696.90px;height:1.70px;background:#9cc46a;"></div>
<div class="a" style="left:1950.05px;top:1027.75px;width:696.90px;height:1.70px;background:#9cc46a;"></div>
<div class="a" style="left:1950.05px;top:939.45px;width:1.70px;height:90.00px;background:#9cc46a;"></div>
<div class="a" style="left:2119.45px;top:939.45px;width:1.70px;height:90.00px;background:#9cc46a;"></div>
<div class="a" style="left:2175.35px;top:939.45px;width:1.70px;height:90.00px;background:#9cc46a;"></div>
<div class="a" style="left:2245.15px;top:939.45px;width:1.70px;height:90.00px;background:#9cc46a;"></div>
<div class="a" style="left:2551.95px;top:939.45px;width:1.70px;height:90.00px;background:#9cc46a;"></div>
<div class="a" style="left:2645.25px;top:939.45px;width:1.70px;height:90.00px;background:#9cc46a;"></div>
<div class="a tx" style="top:948.16px;font-size:17.3px;line-height:17.3px;color:#000;font-weight:bold;font-family:'Liberation Sans', sans-serif;left:1961.90px;">Description</div>
<div class="a tx" style="top:948.16px;font-size:17.3px;line-height:17.3px;color:#000;font-weight:bold;font-family:'Liberation Sans', sans-serif;left:1850.50px;width:600px;text-align:center;">Qty</div>
<div class="a tx" style="top:948.16px;font-size:17.3px;line-height:17.3px;color:#000;font-weight:bold;font-family:'Liberation Sans', sans-serif;left:1913.00px;width:600px;text-align:center;">Price</div>
<div class="a tx" style="top:948.16px;font-size:17.3px;line-height:17.3px;color:#000;font-weight:bold;font-family:'Liberation Sans', sans-serif;left:2257.30px;">Comments</div>
<div class="a tx" style="top:948.16px;font-size:17.3px;line-height:17.3px;color:#000;font-weight:bold;font-family:'Liberation Sans', sans-serif;left:2034.00px;width:600px;text-align:right;">Amount</div>
<div class="a tx" style="top:977.66px;font-size:17.3px;line-height:17.3px;color:#000;font-weight:normal;font-family:'Liberation Sans', sans-serif;left:1961.90px;">Replacement part</div>
<div class="a tx" style="top:977.66px;font-size:17.3px;line-height:17.3px;color:#000;font-weight:normal;font-family:'Liberation Sans', sans-serif;left:1851.00px;width:600px;text-align:center;">1</div>
<div class="a tx" style="top:977.66px;font-size:17.3px;line-height:17.3px;color:#000;font-weight:normal;font-family:'Liberation Sans', sans-serif;left:1911.00px;width:600px;text-align:center;">$100</div>
<div class="a tx" style="top:977.66px;font-size:17.3px;line-height:17.3px;color:#000;font-weight:normal;font-family:'Liberation Sans', sans-serif;left:2034.00px;width:600px;text-align:right;">$100</div>
<div class="a tx" style="top:1006.96px;font-size:17.3px;line-height:17.3px;color:#000;font-weight:normal;font-family:'Liberation Sans', sans-serif;left:1961.90px;">Labour</div>
<div class="a tx" style="top:1006.96px;font-size:17.3px;line-height:17.3px;color:#000;font-weight:normal;font-family:'Liberation Sans', sans-serif;left:1851.00px;width:600px;text-align:center;">1</div>
<div class="a tx" style="top:1006.96px;font-size:17.3px;line-height:17.3px;color:#000;font-weight:normal;font-family:'Liberation Sans', sans-serif;left:1911.00px;width:600px;text-align:center;">$500</div>
<div class="a tx" style="top:1006.96px;font-size:17.3px;line-height:17.3px;color:#000;font-weight:normal;font-family:'Liberation Sans', sans-serif;left:2034.00px;width:600px;text-align:right;">$500</div>
<div class="a" style="left:1950.90px;top:1054.70px;width:695.20px;height:29.60px;background:#dedede;"></div>
<div class="a" style="left:1950.05px;top:1053.85px;width:696.90px;height:1.70px;background:#9cc46a;"></div>
<div class="a" style="left:1950.05px;top:1083.45px;width:696.90px;height:1.70px;background:#9cc46a;"></div>
<div class="a" style="left:1950.05px;top:1053.85px;width:1.70px;height:31.30px;background:#9cc46a;"></div>
<div class="a" style="left:2463.05px;top:1053.85px;width:1.70px;height:31.30px;background:#9cc46a;"></div>
<div class="a" style="left:2559.75px;top:1053.85px;width:1.70px;height:31.30px;background:#9cc46a;"></div>
<div class="a" style="left:2645.25px;top:1053.85px;width:1.70px;height:31.30px;background:#9cc46a;"></div>
<div class="a tx" style="top:1062.56px;font-size:17.3px;line-height:17.3px;color:#000;font-weight:bold;font-family:'Liberation Sans', sans-serif;left:1948.50px;width:600px;text-align:right;">Subtotal</div>
<div class="a tx" style="top:1062.56px;font-size:17.3px;line-height:17.3px;color:#000;font-weight:bold;font-family:'Liberation Sans', sans-serif;left:2034.00px;width:600px;text-align:right;">$600.00</div>
<div class="a" style="left:1950.90px;top:1110.30px;width:695.20px;height:29.50px;background:#dedede;"></div>
<div class="a" style="left:1950.90px;top:1139.80px;width:695.20px;height:29.30px;background:#f3f3f3;"></div>
<div class="a" style="left:1950.90px;top:1169.10px;width:695.20px;height:29.50px;background:#ececec;"></div>
<div class="a" style="left:1950.05px;top:1109.45px;width:696.90px;height:1.70px;background:#9cc46a;"></div>
<div class="a" style="left:1950.05px;top:1138.95px;width:696.90px;height:1.70px;background:#9cc46a;"></div>
<div class="a" style="left:1950.05px;top:1168.25px;width:696.90px;height:1.70px;background:#9cc46a;"></div>
<div class="a" style="left:1950.05px;top:1197.75px;width:696.90px;height:1.70px;background:#9cc46a;"></div>
<div class="a" style="left:1950.05px;top:1109.45px;width:1.70px;height:90.00px;background:#9cc46a;"></div>
<div class="a" style="left:2068.45px;top:1109.45px;width:1.70px;height:90.00px;background:#9cc46a;"></div>
<div class="a" style="left:2551.95px;top:1109.45px;width:1.70px;height:90.00px;background:#9cc46a;"></div>
<div class="a" style="left:2645.25px;top:1109.45px;width:1.70px;height:90.00px;background:#9cc46a;"></div>
<div class="a tx" style="top:1118.16px;font-size:17.3px;line-height:17.3px;color:#000;font-weight:bold;font-family:'Liberation Sans', sans-serif;left:1961.90px;">Description</div>
<div class="a tx" style="top:1118.16px;font-size:17.3px;line-height:17.3px;color:#000;font-weight:bold;font-family:'Liberation Sans', sans-serif;left:2080.00px;">Comments</div>
<div class="a tx" style="top:1118.16px;font-size:17.3px;line-height:17.3px;color:#000;font-weight:bold;font-family:'Liberation Sans', sans-serif;left:2034.00px;width:600px;text-align:right;">Amount</div>
<div class="a tx" style="top:1147.66px;font-size:17.3px;line-height:17.3px;color:#000;font-weight:normal;font-family:'Liberation Sans', sans-serif;left:1961.90px;">Levy</div>
<div class="a tx" style="top:1147.66px;font-size:17.3px;line-height:17.3px;color:#000;font-weight:normal;font-family:'Liberation Sans', sans-serif;left:2034.00px;width:600px;text-align:right;">$10</div>
<div class="a tx" style="top:1176.96px;font-size:17.3px;line-height:17.3px;color:#000;font-weight:normal;font-family:'Liberation Sans', sans-serif;left:1961.90px;">Tax</div>
<div class="a tx" style="top:1176.96px;font-size:17.3px;line-height:17.3px;color:#000;font-weight:normal;font-family:'Liberation Sans', sans-serif;left:2034.00px;width:600px;text-align:right;">$100</div>
<div class="a" style="left:1950.90px;top:1224.70px;width:695.20px;height:29.60px;background:#dedede;"></div>
<div class="a" style="left:1950.05px;top:1223.85px;width:696.90px;height:1.70px;background:#9cc46a;"></div>
<div class="a" style="left:1950.05px;top:1253.45px;width:696.90px;height:1.70px;background:#9cc46a;"></div>
<div class="a" style="left:1950.05px;top:1223.85px;width:1.70px;height:31.30px;background:#9cc46a;"></div>
<div class="a" style="left:2463.05px;top:1223.85px;width:1.70px;height:31.30px;background:#9cc46a;"></div>
<div class="a" style="left:2559.75px;top:1223.85px;width:1.70px;height:31.30px;background:#9cc46a;"></div>
<div class="a" style="left:2645.25px;top:1223.85px;width:1.70px;height:31.30px;background:#9cc46a;"></div>
<div class="a tx" style="top:1232.56px;font-size:17.3px;line-height:17.3px;color:#000;font-weight:bold;font-family:'Liberation Sans', sans-serif;left:1948.50px;width:600px;text-align:right;">Subtotal</div>
<div class="a tx" style="top:1232.56px;font-size:17.3px;line-height:17.3px;color:#000;font-weight:bold;font-family:'Liberation Sans', sans-serif;left:2034.00px;width:600px;text-align:right;">$110.00</div>
<div class="a" style="left:1950.90px;top:1280.30px;width:695.20px;height:29.90px;background:#dedede;"></div>
<div class="a" style="left:1950.05px;top:1279.45px;width:696.90px;height:1.70px;background:#9cc46a;"></div>
<div class="a" style="left:1950.05px;top:1309.35px;width:696.90px;height:1.70px;background:#9cc46a;"></div>
<div class="a" style="left:1950.05px;top:1279.45px;width:1.70px;height:31.60px;background:#9cc46a;"></div>
<div class="a" style="left:2018.95px;top:1279.45px;width:1.70px;height:31.60px;background:#9cc46a;"></div>
<div class="a" style="left:2645.25px;top:1279.45px;width:1.70px;height:31.60px;background:#9cc46a;"></div>
<div class="a tx" style="top:1288.16px;font-size:17.3px;line-height:17.3px;color:#000;font-weight:bold;font-family:'Liberation Sans', sans-serif;left:1967.00px;">Total</div>
<div class="a tx" style="top:1288.16px;font-size:17.3px;line-height:17.3px;color:#000;font-weight:bold;font-family:'Liberation Sans', sans-serif;left:2029.60px;width:600px;text-align:right;">$710.00</div>
<div class="a tx" style="top:1396.79px;font-size:17.5px;line-height:17.5px;color:#000;font-weight:normal;font-family:'Liberation Sans', sans-serif;left:1951.30px;">Generated 2020-02-05 18:23:13</div>
<div class="a tx" style="top:1424.09px;font-size:17.5px;line-height:17.5px;color:#000;font-weight:normal;font-family:'Liberation Sans', sans-serif;left:1951.30px;">Page: 1 / 1</div>
<div class="a tx" style="top:1475.39px;font-size:17.5px;line-height:17.5px;color:#3f8a9b;font-weight:bold;font-family:'Liberation Sans', sans-serif;letter-spacing:-0.5px;left:1997.50px;width:600px;text-align:center;">PDF created using WickedDocs</div>
<div class="a" style="left:1838.00px;top:1556.50px;width:27.40px;height:27.30px;background:#3f8bf8;border-radius:5px;"></div>
<svg style="left:1838px;top:1556.5px" width="28" height="28" viewBox="0 0 28 28">
<path d="M7 14.5 L12 20 L21 7.5" fill="none" stroke="#fff" stroke-width="3" stroke-linecap="round" stroke-linejoin="round"/>
</svg>
<div class="a tx" style="top:1557.59px;font-size:26px;line-height:26px;color:#262626;font-weight:normal;font-family:'Liberation Sans', sans-serif;letter-spacing:0.35px;left:1875.50px;">Auto refresh</div>
<div class="a" style="left:2601.70px;top:1552.30px;width:148.90px;height:37.80px;background:#fff;border-radius:7px;box-shadow:0 0 0 0.8px rgba(0,0,0,0.2), 0 1px 1.5px rgba(0,0,0,0.2);"></div>
<div class="a tx" style="top:1557.59px;font-size:26px;line-height:26px;color:#262626;font-weight:normal;font-family:'Liberation Sans', sans-serif;letter-spacing:-0.15px;left:2576.00px;width:200px;text-align:center;">Refresh</div>
</body></html>
